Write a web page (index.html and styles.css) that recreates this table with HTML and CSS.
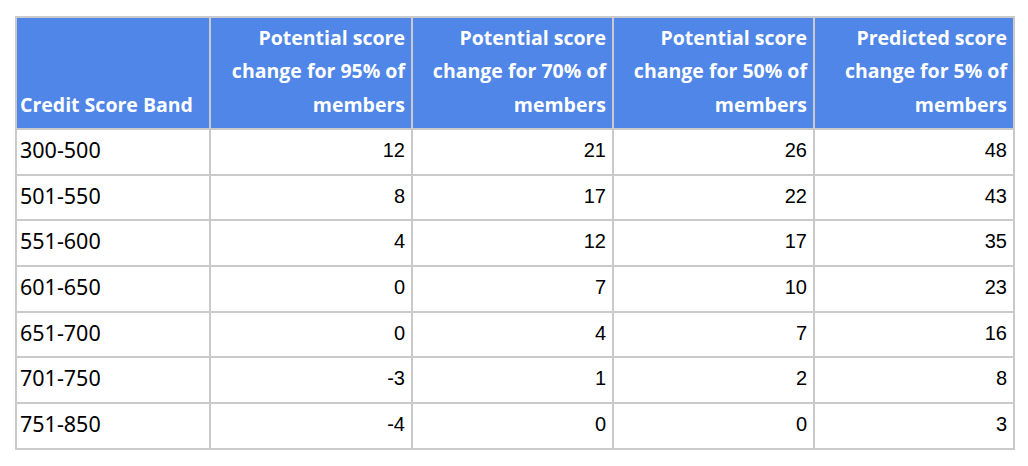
FILE: index.html
```html
<!DOCTYPE html>
<html>
<head>
<meta charset="utf-8">
<link rel="stylesheet" href="styles.css">
</head>
<body>
<table class="scores">
  <colgroup>
    <col class="c1"><col class="c2"><col class="c3"><col class="c4"><col class="c5">
  </colgroup>
  <thead>
    <tr>
      <th class="band">Credit Score Band</th>
      <th>Potential score change for 95% of members</th>
      <th>Potential score change for 70% of members</th>
      <th>Potential score change for 50% of members</th>
      <th>Predicted score change for 5% of members</th>
    </tr>
  </thead>
  <tbody>
    <tr><td class="band">300-500</td><td>12</td><td>21</td><td>26</td><td>48</td></tr>
    <tr><td class="band">501-550</td><td>8</td><td>17</td><td>22</td><td>43</td></tr>
    <tr><td class="band">551-600</td><td>4</td><td>12</td><td>17</td><td>35</td></tr>
    <tr><td class="band">601-650</td><td>0</td><td>7</td><td>10</td><td>23</td></tr>
    <tr><td class="band">651-700</td><td>0</td><td>4</td><td>7</td><td>16</td></tr>
    <tr><td class="band">701-750</td><td>-3</td><td>1</td><td>2</td><td>8</td></tr>
    <tr><td class="band">751-850</td><td>-4</td><td>0</td><td>0</td><td>3</td></tr>
  </tbody>
</table>
</body>
</html>
```
FILE: styles.css
```css
html, body {
  margin: 0;
  padding: 0;
  background: #ffffff;
}
body {
  padding: 16px 0 0 15px;
}
.scores {
  border-collapse: collapse;
  table-layout: fixed;
  width: 998px;
  border: 2px solid #cacaca;
}
.c1 { width: 194px; }
.c2 { width: 202px; }
.c3 { width: 201px; }
.c4 { width: 201px; }
.c5 { width: 200px; }
.scores th,
.scores td {
  border: 2px solid #cacaca;
}
.scores th {
  background: #4f86e8;
  color: #ffffff;
  font-family: "Open Sans", "Lato", sans-serif;
  font-weight: 700;
  font-size: 19.5px;
  line-height: 33.5px;
  text-align: right;
  vertical-align: bottom;
  padding: 0 6px 7px 3px;
  height: 103px;
}
.scores th.band {
  text-align: left;
}
.scores td {
  font-family: "Liberation Sans", Arial, sans-serif;
  font-size: 20px;
  line-height: 24px;
  color: #000000;
  text-align: right;
  vertical-align: top;
  padding: 8px 6px 11.7px 3px;
  height: 24px;
}
.scores td.band {
  text-align: left;
  font-family: "Noto Sans", "Open Sans", sans-serif;
  font-size: 21.5px;
}
```
